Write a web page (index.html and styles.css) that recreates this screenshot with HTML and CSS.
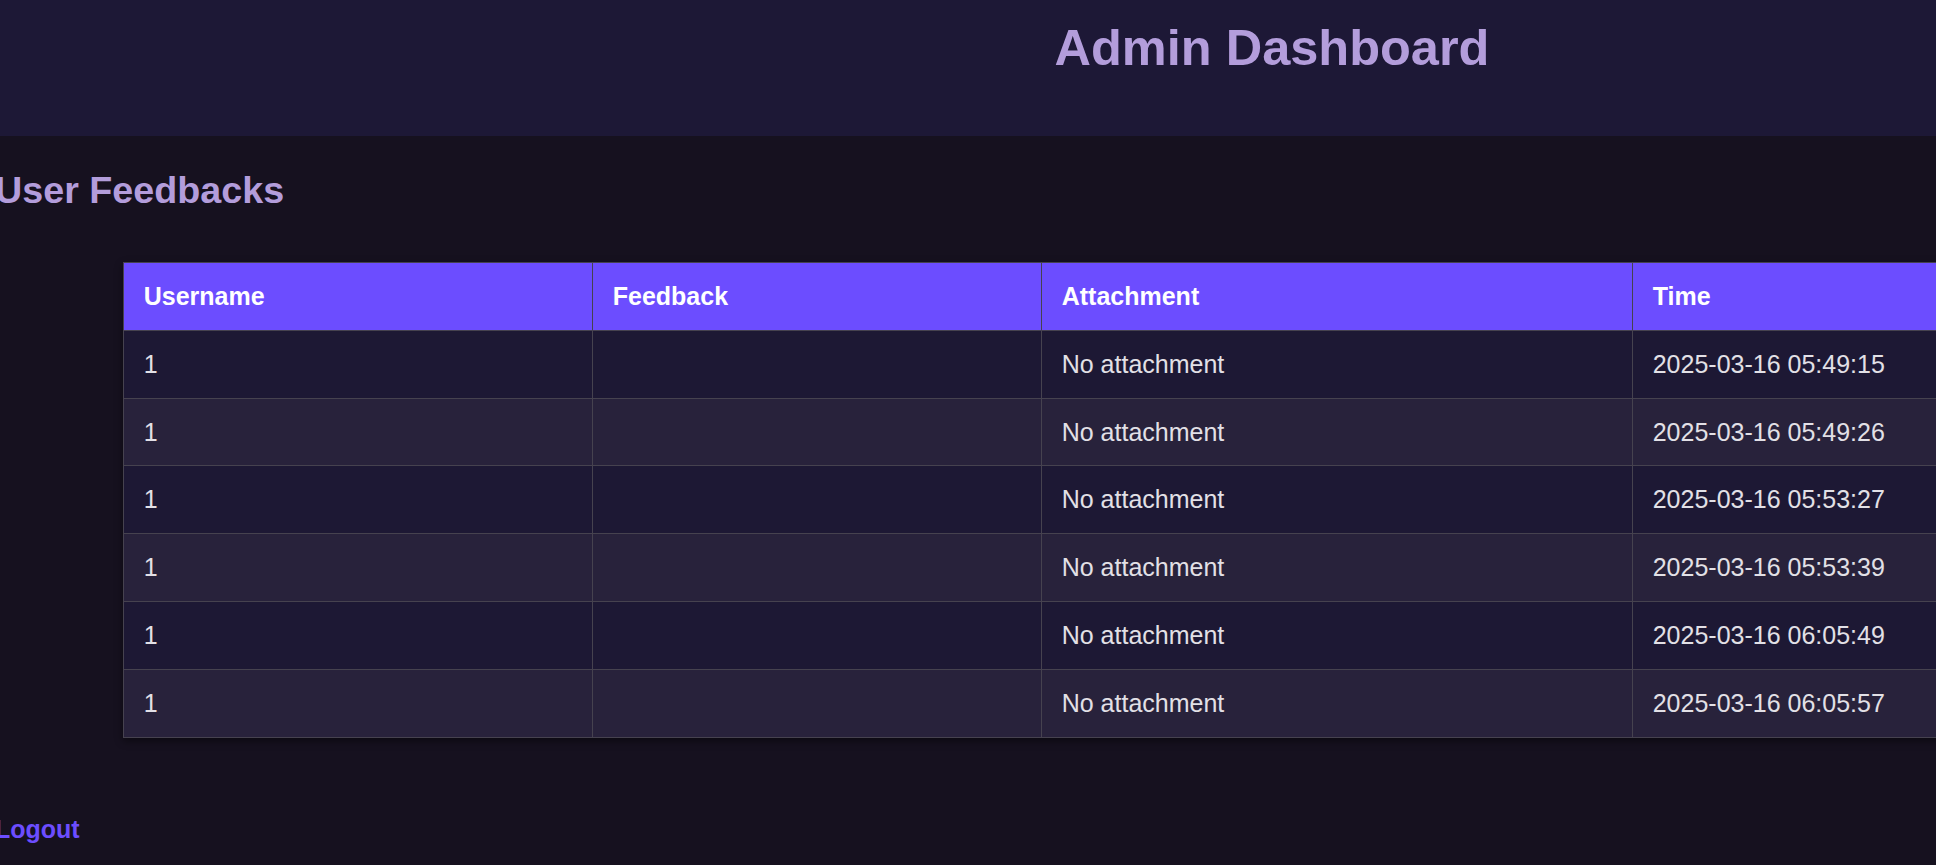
FILE: index.html
```html
<!DOCTYPE html>
<html lang="en">
<head>
<meta charset="utf-8">
<title>Admin Dashboard</title>
<link rel="stylesheet" href="styles.css">
</head>
<body>
<div class="page">
  <header class="topbar">
    <h1 class="title">Admin Dashboard</h1>
  </header>
  <main class="content">
    <h2 class="section-title">User Feedbacks</h2>
    <table class="feedback-table">
      <thead>
        <tr>
          <th class="col-user">Username</th>
          <th class="col-feedback">Feedback</th>
          <th class="col-attach">Attachment</th>
          <th class="col-time">Time</th>
        </tr>
      </thead>
      <tbody>
        <tr><td>1</td><td></td><td>No attachment</td><td>2025-03-16 05:49:15</td></tr>
        <tr><td>1</td><td></td><td>No attachment</td><td>2025-03-16 05:49:26</td></tr>
        <tr><td>1</td><td></td><td>No attachment</td><td>2025-03-16 05:53:27</td></tr>
        <tr><td>1</td><td></td><td>No attachment</td><td>2025-03-16 05:53:39</td></tr>
        <tr><td>1</td><td></td><td>No attachment</td><td>2025-03-16 06:05:49</td></tr>
        <tr><td>1</td><td></td><td>No attachment</td><td>2025-03-16 06:05:57</td></tr>
      </tbody>
    </table>
    <div class="actions">
      <a class="logout" href="#">Logout</a>
    </div>
  </main>
</div>
</body>
</html>
```

FILE: styles.css
```css
html, body {
  margin: 0;
  padding: 0;
}

body {
  background: #16111f;
  font-family: "Liberation Sans", Arial, sans-serif;
  font-size: 25px;
  color: #e2e0e6;
  overflow: hidden;
}

.page {
  width: 2554px;
  margin-left: -5px;
}

.topbar {
  background: #1d1836;
  height: 136px;
  box-sizing: border-box;
  padding-top: 19px;
  text-align: center;
}

.title {
  margin: 0;
  font-size: 50.5px;
  line-height: 58px;
  font-weight: bold;
  color: #b39ddb;
}

.content {
  display: flex;
  flex-direction: column;
  align-items: flex-start;
}

.section-title {
  margin: 33px 0 0;
  font-size: 37.7px;
  line-height: 43px;
  font-weight: bold;
  color: #b39ddb;
}

.feedback-table {
  align-self: center;
  width: 90%;
  margin-top: 50px;
  border-collapse: collapse;
  table-layout: fixed;
  box-shadow: 0 3px 8px rgba(0, 0, 0, 0.45);
}

.feedback-table th,
.feedback-table td {
  border: 1px solid #46424f;
  padding: 20px 20px;
  line-height: 26.8px;
  text-align: left;
  vertical-align: middle;
  white-space: nowrap;
}

.feedback-table th {
  background: #6c4dff;
  color: #ffffff;
  font-weight: bold;
}

.col-user { width: 428px; }
.col-feedback { width: 408px; }
.col-attach { width: 550px; }

.feedback-table tbody tr:nth-child(odd) td {
  background: #1d1834;
}

.feedback-table tbody tr:nth-child(even) td {
  background: #28223b;
}

.actions {
  margin-top: 77px;
}

.logout {
  font-weight: bold;
  color: #6c4dff;
  text-decoration: none;
  line-height: 29px;
}
```
